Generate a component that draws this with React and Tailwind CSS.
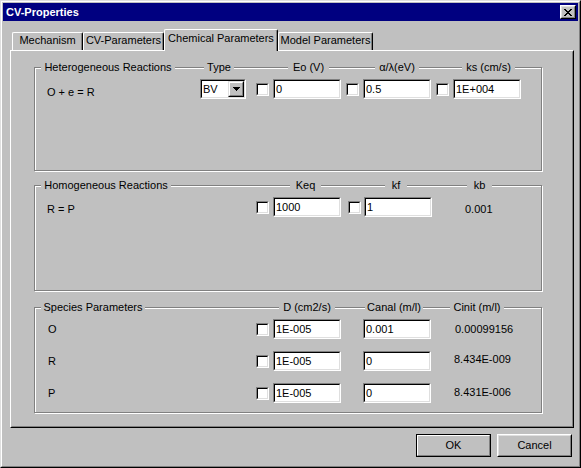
import React from "react";

const Sunken = ({ className = "", children }) => (
  <div className={"border border-t-[#808080] border-l-[#808080] border-b-white border-r-white " + className}>
    <div className="h-full w-full border border-t-black border-l-black border-b-[#dfdfdf] border-r-[#dfdfdf] bg-white">
      {children}
    </div>
  </div>
);

const Edit = ({ value, className = "" }) => (
  <Sunken className={"h-[20px] w-[68px] shrink-0 " + className}>
    <div className="whitespace-nowrap pl-[1px] leading-[16px]">{value}</div>
  </Sunken>
);

const Check = ({ className = "" }) => <Sunken className={"h-[13px] w-[13px] shrink-0 " + className} />;

const Select = () => (
  <Sunken className="h-[20px] w-[46px] shrink-0">
    <div className="flex h-full">
      <div className="flex-1 pl-[1px] leading-[16px]">BV</div>
      <div className="h-[16px] w-[16px] border border-t-[#dfdfdf] border-l-[#dfdfdf] border-b-black border-r-black bg-[#c0c0c0]">
        <div className="flex h-full w-full items-center justify-center border border-t-white border-l-white border-b-[#808080] border-r-[#808080]">
          <svg width="7" height="4" viewBox="0 0 7 4" shapeRendering="crispEdges">
            <rect x="0" y="0" width="7" height="1" fill="#000" />
            <rect x="1" y="1" width="5" height="1" fill="#000" />
            <rect x="2" y="2" width="3" height="1" fill="#000" />
            <rect x="3" y="3" width="1" height="1" fill="#000" />
          </svg>
        </div>
      </div>
    </div>
  </Sunken>
);

const Group = ({ className = "", children }) => (
  <div className={"w-[508px] border border-[#808080] shadow-[inset_1px_1px_0_#ffffff,1px_1px_0_#ffffff] " + className}>
    {children}
  </div>
);

const Label = ({ className = "", children }) => (
  <div className={"shrink-0 whitespace-nowrap bg-[#c0c0c0] text-center " + className}>{children}</div>
);

const Tab = ({ className = "", children }) => (
  <div className={"h-[18px] shrink-0 whitespace-nowrap rounded-t-[2px] border-l border-t border-r border-l-white border-t-white border-r-black pt-[1px] text-center shadow-[inset_-1px_0_0_#808080] " + className}>
    {children}
  </div>
);

export default function App() {
  return (
    <div className="h-[468px] w-[581px] bg-[#c0c0c0] font-['Liberation_Sans',Arial,sans-serif] text-[11px] leading-[13px] text-black">
      <div className="h-full w-full border border-t-[#dfdfdf] border-l-[#dfdfdf] border-b-black border-r-black">
        <div className="h-full w-full border border-t-white border-l-white border-b-[#808080] border-r-[#808080] p-[1px]">
          {/* Title bar */}
          <div className="flex h-[18px] items-center justify-between bg-[#000080] pl-[3px] pr-[2px]">
            <div className="font-bold text-white">CV-Properties</div>
            <div className="h-[14px] w-[16px] border border-t-white border-l-white border-b-black border-r-black bg-[#c0c0c0]">
              <div className="flex h-full w-full items-center justify-center border border-t-[#dfdfdf] border-l-[#dfdfdf] border-b-[#808080] border-r-[#808080]">
                <svg width="8" height="7" viewBox="0 0 8 7" shapeRendering="crispEdges">
                  <path d="M0 0h2v1h-2zM6 0h2v1h-2zM1 1h2v1h-2zM5 1h2v1h-2zM2 2h4v1h-4zM3 3h2v1h-2zM2 4h4v1h-4zM1 5h2v1h-2zM5 5h2v1h-2zM0 6h2v1h-2zM6 6h2v1h-2z" fill="#000" />
                </svg>
              </div>
            </div>
          </div>

          {/* Tabs + panel */}
          <div className="ml-[7px] mt-[8px] w-[564px]">
            <div className="flex h-[21px] items-end pl-[2px]">
              <Tab className="w-[71px]">Mechanism</Tab>
              <Tab className="w-[81px]">CV-Parameters</Tab>
              <div className="relative z-10 -mb-[1px] h-[22px] w-[114px] shrink-0 whitespace-nowrap rounded-t-[2px] border-l border-t border-r border-l-white border-t-white border-r-black bg-[#c0c0c0] pt-[2px] text-center shadow-[inset_-1px_0_0_#808080]">
                Chemical Parameters
              </div>
              <Tab className="w-[95px]">Model Parameters</Tab>
            </div>
            <div className="h-[378px] w-[564px] border border-t-white border-l-white border-b-black border-r-black">
              <div className="h-full w-full border border-t-transparent border-l-transparent border-b-[#808080] border-r-[#808080] pl-[22px] pt-[15px]">
                {/* Heterogeneous */}
                <Group className="h-[104px]">
                  <div className="-mt-[7px] flex h-[13px]">
                    <Label className="ml-[6px] w-[134px]">Heterogeneous Reactions</Label>
                    <Label className="ml-[29px] w-[30px]">Type</Label>
                    <Label className="ml-[54px] w-[41px]">Eo (V)</Label>
                    <Label className="ml-[46px] w-[44px]">α/λ(eV)</Label>
                    <Label className="ml-[43px] w-[53px]">ks (cm/s)</Label>
                  </div>
                  <div className="mt-[5px] flex h-[20px] items-center">
                    <div className="ml-[12px] mt-[7px] w-[153px] shrink-0 self-start whitespace-nowrap">O + e = R</div>
                    <Select />
                    <Check className="ml-[10px]" />
                    <Edit className="ml-[4px]" value="0" />
                    <Check className="ml-[5px]" />
                    <Edit className="ml-[4px]" value="0.5" />
                    <Check className="ml-[5px]" />
                    <Edit className="ml-[4px]" value="1E+004" />
                  </div>
                </Group>

                {/* Homogeneous */}
                <Group className="mt-[14px] h-[106px]">
                  <div className="-mt-[7px] flex h-[13px]">
                    <Label className="ml-[6px] w-[130px]">Homogeneous Reactions</Label>
                    <Label className="ml-[119px] w-[31px]">Keq</Label>
                    <Label className="ml-[64px] w-[22px]">kf</Label>
                    <Label className="ml-[60px] w-[25px]">kb</Label>
                  </div>
                  <div className="mt-[5px] flex h-[20px] items-center">
                    <div className="ml-[12px] mt-[6px] w-[209px] shrink-0 self-start whitespace-nowrap">R = P</div>
                    <Check />
                    <Edit className="ml-[4px]" value="1000" />
                    <Check className="ml-[7px]" />
                    <Edit className="ml-[3px]" value="1" />
                    <div className="ml-[33px] mt-[6px] self-start whitespace-nowrap">0.001</div>
                  </div>
                </Group>

                {/* Species */}
                <Group className="mt-[16px] h-[106px]">
                  <div className="-mt-[7px] flex h-[13px]">
                    <Label className="ml-[6px] w-[104px]">Species Parameters</Label>
                    <Label className="ml-[134px] w-[56px]">D (cm2/s)</Label>
                    <Label className="ml-[30px] w-[58px]">Canal (m/l)</Label>
                    <Label className="ml-[27px] w-[54px]">Cinit (m/l)</Label>
                  </div>
                  <div className="mt-[5px] flex h-[20px] items-center">
                    <div className="ml-[13px] w-[208px] shrink-0 whitespace-nowrap">O</div>
                    <Check />
                    <Edit className="ml-[4px]" value="1E-005" />
                    <Edit className="ml-[22px]" value="0.001" />
                    <div className="ml-[24px] whitespace-nowrap">0.00099156</div>
                  </div>
                  <div className="mt-[12px] flex h-[20px] items-center">
                    <div className="ml-[13px] w-[208px] shrink-0 whitespace-nowrap">R</div>
                    <Check />
                    <Edit className="ml-[4px]" value="1E-005" />
                    <Edit className="ml-[22px]" value="0" />
                    <div className="ml-[23px] -mt-[3px] whitespace-nowrap">8.434E-009</div>
                  </div>
                  <div className="mt-[12px] flex h-[20px] items-center">
                    <div className="ml-[13px] w-[208px] shrink-0 whitespace-nowrap">P</div>
                    <Check />
                    <Edit className="ml-[4px]" value="1E-005" />
                    <Edit className="ml-[22px]" value="0" />
                    <div className="ml-[23px] -mt-[2px] whitespace-nowrap">8.431E-006</div>
                  </div>
                </Group>
              </div>
            </div>
          </div>

          {/* Buttons */}
          <div className="mt-[6px] flex justify-end gap-[6px] pr-[6px]">
            <div className="h-[23px] w-[75px] border border-black">
              <div className="flex h-full w-full items-center justify-center border border-t-white border-l-white border-b-[#808080] border-r-[#808080]">
                OK
              </div>
            </div>
            <div className="h-[23px] w-[75px] border border-t-white border-l-white border-b-black border-r-black">
              <div className="flex h-full w-full items-center justify-center border border-t-[#dfdfdf] border-l-[#dfdfdf] border-b-[#808080] border-r-[#808080]">
                Cancel
              </div>
            </div>
          </div>
        </div>
      </div>
    </div>
  );
}
